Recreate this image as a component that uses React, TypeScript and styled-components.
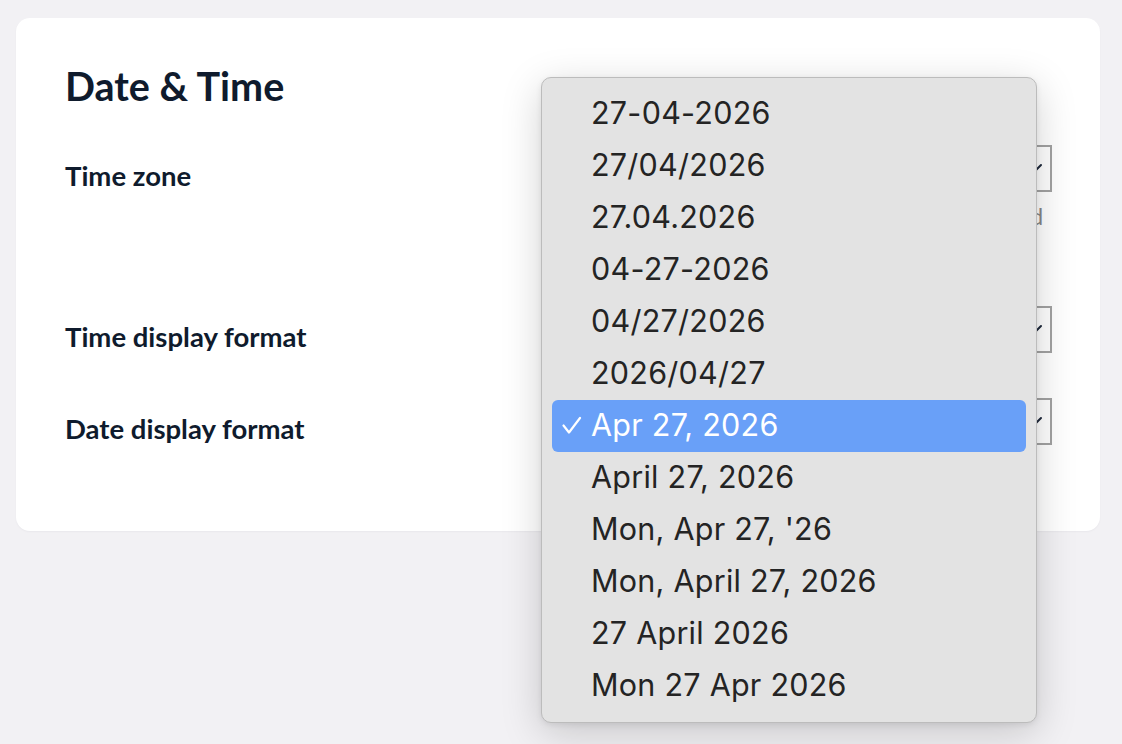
import React from "react";
import styled, { createGlobalStyle } from "styled-components";

const GlobalStyle = createGlobalStyle`
  html, body {
    margin: 0;
    padding: 0;
    background: #f2f1f4;
  }
  body {
    font-family: Lato, "Noto Sans", sans-serif;
  }
`;

const dateFormats = [
  "27-04-2026",
  "27/04/2026",
  "27.04.2026",
  "04-27-2026",
  "04/27/2026",
  "2026/04/27",
  "Apr 27, 2026",
  "April 27, 2026",
  "Mon, Apr 27, '26",
  "Mon, April 27, 2026",
  "27 April 2026",
  "Mon 27 Apr 2026",
];

const selectedFormat = "Apr 27, 2026";

const Page = styled.div`
  position: relative;
  min-height: 744px;
  padding: 18px 22px 0 16px;
  box-sizing: border-box;
`;

const Card = styled.section`
  background: #ffffff;
  border-radius: 14px;
  padding: 44px 48px 86px 49px;
  box-shadow: 0 1px 2px rgba(15, 27, 45, 0.04);
`;

const Title = styled.h2`
  margin: 0 0 35px;
  font-family: Lato, sans-serif;
  font-weight: 700;
  font-size: 39.5px;
  line-height: 1.22;
  color: #0f1b2d;
`;

const Rows = styled.div`
  display: flex;
  flex-direction: column;
  gap: 45px;
`;

const Row = styled.div`
  display: grid;
  grid-template-columns: 1fr 480px;
  align-items: start;
`;

const Label = styled.div`
  padding-top: 14px;
  font-family: Lato, sans-serif;
  font-weight: 700;
  font-size: 27.5px;
  line-height: 1.2;
  color: #0f1b2d;
`;

const Control = styled.div`
  display: flex;
  flex-direction: column;
`;

const SelectBox = styled.div`
  height: 47px;
  box-sizing: border-box;
  border: 2px solid #a2a2a2;
  background: #ffffff;
  display: flex;
  align-items: center;
  justify-content: flex-end;
  padding: 0 7px;
  font-family: Lato, sans-serif;
  font-size: 22px;
  color: #0f1b2d;
`;

const Hint = styled.div`
  margin: 11px 0 31px;
  padding-right: 9px;
  font-family: Lato, sans-serif;
  font-size: 22.5px;
  line-height: 27px;
  color: #878787;
  text-align: right;
`;

const Menu = styled.ul`
  position: absolute;
  left: 541px;
  top: 77px;
  width: 496px;
  margin: 0;
  padding: 10px;
  box-sizing: border-box;
  list-style: none;
  background: #e3e3e3;
  border: 1px solid #bcbcbc;
  border-radius: 10px;
  box-shadow: 0 10px 40px rgba(0, 0, 0, 0.18), 0 2px 6px rgba(0, 0, 0, 0.08);
`;

const Item = styled.li<{ $active?: boolean }>`
  position: relative;
  height: 52px;
  box-sizing: border-box;
  display: flex;
  align-items: center;
  padding: 0 0 3px 39px;
  border-radius: 6px;
  font-family: Inter, "Noto Sans", sans-serif;
  font-size: 30.5px;
  letter-spacing: 0.25px;
  color: ${(p) => (p.$active ? "#ffffff" : "#242424")};
  background: ${(p) => (p.$active ? "#69a0f8" : "transparent")};
`;

const Check = styled.svg`
  position: absolute;
  left: 10px;
  top: 50%;
  transform: translateY(-50%);
`;

const Chevron = () => (
  <svg width="18" height="12" viewBox="0 0 18 12" fill="none">
    <path d="M2 2 L9 9 L16 2" stroke="#1e293b" strokeWidth="2" strokeLinecap="round" />
  </svg>
);

export default function App() {
  return (
    <Page>
      <GlobalStyle />
      <Card>
        <Title>Date &amp; Time</Title>
        <Rows>
          <Row>
            <Label>Time zone</Label>
            <Control>
              <SelectBox>
                <Chevron />
              </SelectBox>
              <Hint>Automatically detected</Hint>
            </Control>
          </Row>
          <Row>
            <Label>Time display format</Label>
            <Control>
              <SelectBox>
                <Chevron />
              </SelectBox>
            </Control>
          </Row>
          <Row>
            <Label>Date display format</Label>
            <Control>
              <SelectBox>
                <Chevron />
              </SelectBox>
            </Control>
          </Row>
        </Rows>
      </Card>
      <Menu>
        {dateFormats.map((f) => (
          <Item key={f} $active={f === selectedFormat}>
            {f === selectedFormat && (
              <Check width="20" height="20" viewBox="0 0 20 20" fill="none">
                <path
                  d="M1.5 9.5 L7 16.5 L18 2"
                  stroke="#ffffff"
                  strokeWidth="2.2"
                  strokeLinecap="round"
                  strokeLinejoin="round"
                />
              </Check>
            )}
            {f}
          </Item>
        ))}
      </Menu>
    </Page>
  );
}
